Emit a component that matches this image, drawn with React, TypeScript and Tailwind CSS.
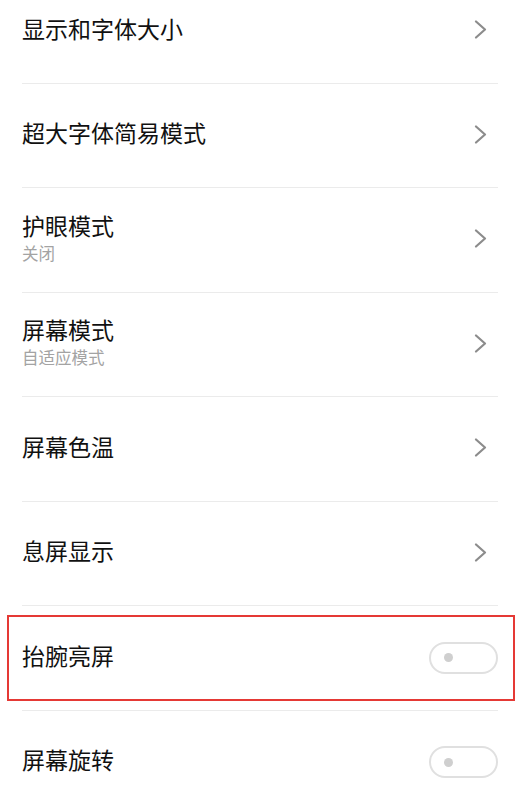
import React from 'react';

type Row = {
  title: string;
  sub?: string;
  kind: 'nav' | 'switch';
  highlight?: boolean;
};

const rows: Row[] = [
  { title: '显示和字体大小', kind: 'nav' },
  { title: '超大字体简易模式', kind: 'nav' },
  { title: '护眼模式', sub: '关闭', kind: 'nav' },
  { title: '屏幕模式', sub: '自适应模式', kind: 'nav' },
  { title: '屏幕色温', kind: 'nav' },
  { title: '息屏显示', kind: 'nav' },
  { title: '抬腕亮屏', kind: 'switch', highlight: true },
  { title: '屏幕旋转', kind: 'switch' },
];

const Chevron = () => (
  <svg width="13" height="19" viewBox="0 0 13 19" fill="none" className="shrink-0">
    <path d="M2 1.5 L11 9.5 L2 17.5" stroke="#8c8c8c" strokeWidth="2.2" strokeLinecap="round" strokeLinejoin="round" />
  </svg>
);

const Toggle = () => (
  <div className="w-[69px] h-[32px] rounded-full border-2 border-[#e0e0e0] bg-white flex items-center pl-[13px] shrink-0">
    <div className="w-[9px] h-[9px] rounded-full bg-[#cfcfcf]" />
  </div>
);

export default function App() {
  return (
    <div
      className="w-[520px] h-[794px] overflow-hidden bg-white"
      style={{ fontFamily: '"Noto Sans CJK SC", "Noto Sans", sans-serif' }}
    >
      <div className="-mt-[21px]">
        {rows.map((row, idx) => (
          <div key={idx} className="relative h-[104.5px]">
            <div className="h-full mx-[22px] flex items-center justify-between border-b border-[#ebebeb]">
              <div className="flex flex-col mb-[6px]">
                <span className="text-[23px] leading-[30px] text-[#111111]">{row.title}</span>
                {row.sub && (
                  <span className="text-[16.5px] leading-[22px] text-[#a3a3a3] mt-[2px]">{row.sub}</span>
                )}
              </div>
              {row.kind === 'nav' ? (
                <div className="mr-[11px] mb-[2px]">
                  <Chevron />
                </div>
              ) : (
                <Toggle />
              )}
            </div>
            {row.highlight && (
              <div className="absolute left-[7px] right-[5px] top-[9px] bottom-[10px] border-2 border-[#e53935] pointer-events-none" />
            )}
          </div>
        ))}
      </div>
    </div>
  );
}
